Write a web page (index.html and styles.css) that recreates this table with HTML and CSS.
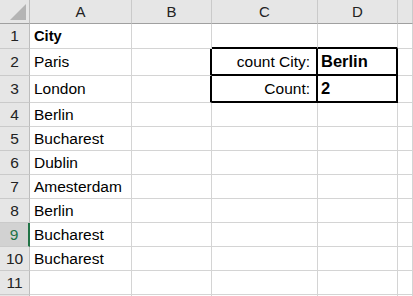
FILE: index.html
```html
<!DOCTYPE html>
<html lang="en">
<head>
    <meta charset="UTF-8">
    <meta name="viewport" content="width=device-width, initial-scale=1.0">
    <title>Book1 - Sheet1</title>
    <link rel="stylesheet" href="styles.css">
</head>
<body>
    <div class="sheet">
        <!-- column headers -->
        <div class="cell corner"><span class="corner-mark"></span></div>
        <div class="cell col-head">A</div>
        <div class="cell col-head">B</div>
        <div class="cell col-head">C</div>
        <div class="cell col-head">D</div>
        <div class="cell col-head"></div>

        <!-- row 1 -->
        <div class="cell row-head">1</div>
        <div class="cell bold">City</div>
        <div class="cell"></div>
        <div class="cell edge-bottom"></div>
        <div class="cell edge-bottom"></div>
        <div class="cell"></div>

        <!-- row 2 -->
        <div class="cell row-head">2</div>
        <div class="cell">Paris</div>
        <div class="cell edge-right"></div>
        <div class="cell right edge-right edge-bottom">count City:</div>
        <div class="cell result edge-right edge-bottom">Berlin</div>
        <div class="cell"></div>

        <!-- row 3 -->
        <div class="cell row-head">3</div>
        <div class="cell">London</div>
        <div class="cell edge-right"></div>
        <div class="cell right edge-right edge-bottom">Count:</div>
        <div class="cell result edge-right edge-bottom">2</div>
        <div class="cell"></div>

        <!-- row 4 -->
        <div class="cell row-head">4</div>
        <div class="cell">Berlin</div>
        <div class="cell"></div>
        <div class="cell"></div>
        <div class="cell"></div>
        <div class="cell"></div>

        <!-- row 5 -->
        <div class="cell row-head">5</div>
        <div class="cell">Bucharest</div>
        <div class="cell"></div>
        <div class="cell"></div>
        <div class="cell"></div>
        <div class="cell"></div>

        <!-- row 6 -->
        <div class="cell row-head">6</div>
        <div class="cell">Dublin</div>
        <div class="cell"></div>
        <div class="cell"></div>
        <div class="cell"></div>
        <div class="cell"></div>

        <!-- row 7 -->
        <div class="cell row-head">7</div>
        <div class="cell">Amesterdam</div>
        <div class="cell"></div>
        <div class="cell"></div>
        <div class="cell"></div>
        <div class="cell"></div>

        <!-- row 8 -->
        <div class="cell row-head">8</div>
        <div class="cell">Berlin</div>
        <div class="cell"></div>
        <div class="cell"></div>
        <div class="cell"></div>
        <div class="cell"></div>

        <!-- row 9 (active row) -->
        <div class="cell row-head active">9</div>
        <div class="cell">Bucharest</div>
        <div class="cell"></div>
        <div class="cell"></div>
        <div class="cell"></div>
        <div class="cell"></div>

        <!-- row 10 -->
        <div class="cell row-head">10</div>
        <div class="cell">Bucharest</div>
        <div class="cell"></div>
        <div class="cell"></div>
        <div class="cell"></div>
        <div class="cell"></div>

        <!-- row 11 -->
        <div class="cell row-head">11</div>
        <div class="cell"></div>
        <div class="cell"></div>
        <div class="cell"></div>
        <div class="cell"></div>
        <div class="cell"></div>

        <!-- row 12, cut off -->
        <div class="cell row-head"></div>
        <div class="cell"></div>
        <div class="cell"></div>
        <div class="cell"></div>
        <div class="cell"></div>
        <div class="cell"></div>
    </div>
</body>
</html>
```

FILE: styles.css
```css
* {
    margin: 0;
    padding: 0;
    box-sizing: border-box;
}

body {
    font-family: "Liberation Sans", Arial, sans-serif;
    background: #fff;
    color: #000;
    width: 413px;
    height: 296px;
    overflow: hidden;
}

.sheet {
    display: grid;
    grid-template-columns: 30px 102px 80px 106px 80px 15px;
    grid-template-rows: 24px 25px 27px 27px repeat(8, 24px) 2px;
    width: 413px;
    height: 296px;
}

.cell {
    display: flex;
    align-items: center;
    padding: 0 4px;
    font-size: 15.5px;
    white-space: nowrap;
    border-right: 1px solid #d4d4d4;
    border-bottom: 1px solid #d4d4d4;
}

.bold {
    font-weight: bold;
    font-size: 14.7px;
}

.right {
    justify-content: flex-end;
    padding-right: 6px;
}

.result {
    font-weight: bold;
    font-size: 16.5px;
    padding-left: 3px;
}

/* headers */
.col-head,
.corner {
    background: #e6e6e6;
    justify-content: center;
    color: #222;
    font-size: 15px;
    border-right-color: #cacaca;
    border-bottom-color: #a0a0a0;
}

.corner {
    position: relative;
    border-right-color: #bdbdbd;
}

.corner-mark {
    position: absolute;
    left: 10px;
    top: 4px;
    width: 16px;
    height: 16px;
    background: #b4b4b4;
    clip-path: polygon(100% 0, 100% 100%, 0 100%);
}

.row-head {
    background: #e6e6e6;
    justify-content: center;
    color: #222;
    padding: 0;
    border-right-color: #bdbdbd;
    border-bottom-color: #cacaca;
}

.row-head.active {
    background: #d2d2d2;
    color: #217346;
    border-right: 2px solid #217346;
}

/* thick outline around C2:D3 */
.edge-bottom {
    border-bottom: 2px solid #000;
}

.edge-right {
    border-right: 2px solid #000;
}
```
